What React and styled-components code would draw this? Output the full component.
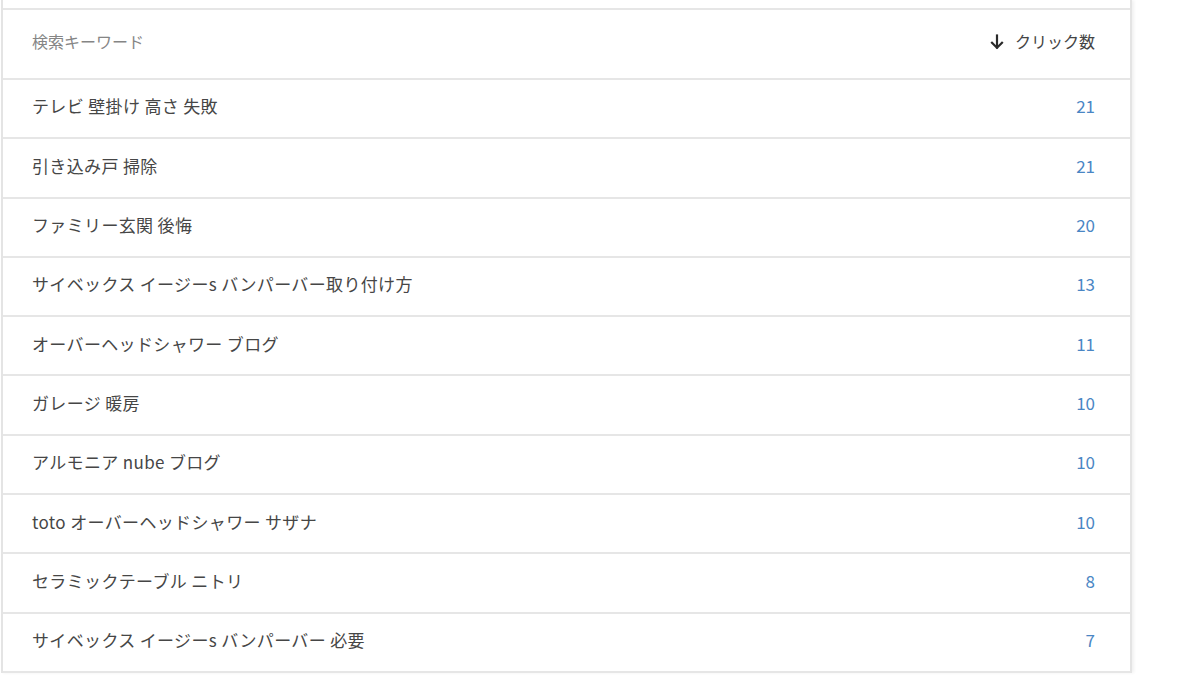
import React from "react";
import styled, { createGlobalStyle } from "styled-components";

const Global = createGlobalStyle`
  html, body { margin: 0; padding: 0; background: #fff; }
  body { font-family: "Noto Sans CJK JP", "Noto Sans", sans-serif; }
`;

const Page = styled.div`
  width: 1200px;
  height: 675px;
  overflow: hidden;
  background: #fff;
`;

const Card = styled.div`
  width: 1131px;
  margin-left: 1px;
  border-left: 2px solid #e4e4e4;
  border-right: 2px solid #e4e4e4;
  box-shadow: 2px 0 3px rgba(0, 0, 0, 0.06);
  background: #fff;
  box-sizing: border-box;
`;

const TopStub = styled.div`
  height: 8px;
  border-bottom: 2px solid #e6e6e6;
`;

const Row = styled.div`
  display: flex;
  align-items: center;
  justify-content: space-between;
  box-sizing: border-box;
  height: ${(p) => p.$h}px;
  padding: 0 35px 4px 29px;
  border-bottom: 2px solid #e6e6e6;
  line-height: 1.2;
`;

const HeadLabel = styled.span`
  font-size: 16px;
  color: #858585;
`;

const SortHead = styled.span`
  display: flex;
  align-items: center;
  gap: 11px;
  font-size: 16px;
  color: #444;
`;

const Keyword = styled.span`
  font-size: 17px;
  letter-spacing: 0.35px;
  color: #464646;
`;

const Count = styled.span`
  font-size: 17px;
  color: #4a86c4;
`;

const DownArrow = () => (
  <svg width="14" height="16" viewBox="0 0 14 16" fill="none" stroke="#2a2a2a" strokeWidth="2.2" strokeLinecap="square">
    <path d="M7 1.5v12" />
    <path d="M2 8.8l5 5 5-5" />
  </svg>
);

const data = [
  ["テレビ 壁掛け 高さ 失敗", 21],
  ["引き込み戸 掃除", 21],
  ["ファミリー玄関 後悔", 20],
  ["サイベックス イージーs バンパーバー取り付け方", 13],
  ["オーバーヘッドシャワー ブログ", 11],
  ["ガレージ 暖房", 10],
  ["アルモニア nube ブログ", 10],
  ["toto オーバーヘッドシャワー サザナ", 10],
  ["セラミックテーブル ニトリ", 8],
  ["サイベックス イージーs バンパーバー 必要", 7],
];

export default function App() {
  return (
    <Page>
      <Global />
      <Card>
        <TopStub />
        <Row $h={70}>
          <HeadLabel>検索キーワード</HeadLabel>
          <SortHead>
            <DownArrow />
            クリック数
          </SortHead>
        </Row>
        {data.map(([k, v]) => (
          <Row key={k} $h={59.3}>
            <Keyword>{k}</Keyword>
            <Count>{v}</Count>
          </Row>
        ))}
      </Card>
    </Page>
  );
}
